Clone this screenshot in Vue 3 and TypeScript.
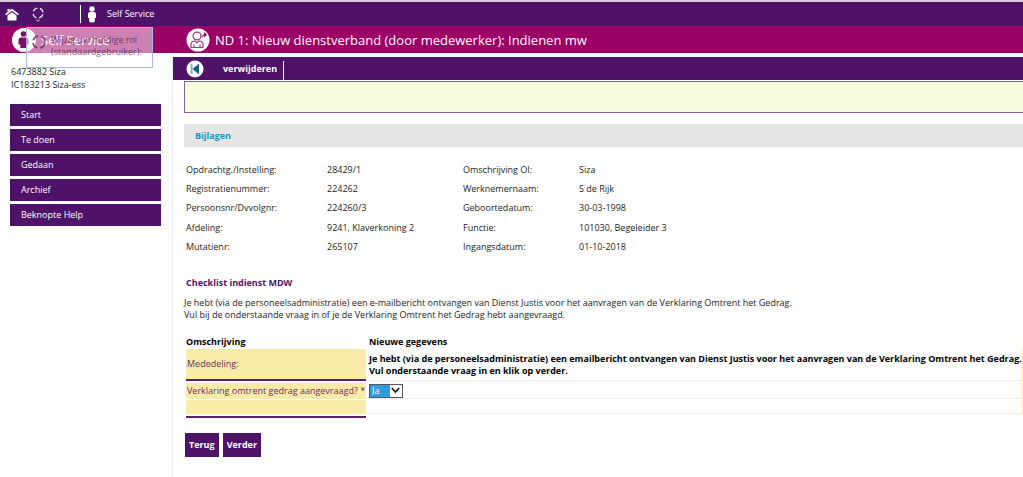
<script setup lang="ts">
import { ref } from 'vue'

const account = ['6473882 Siza', 'IC183213 Siza-ess']
const menu = ['Start', 'Te doen', 'Gedaan', 'Archief', 'Beknopte Help']
const details: string[][] = [
  ['Opdrachtg./Instelling:', '28429/1', 'Omschrijving OI:', 'Siza'],
  ['Registratienummer:', '224262', 'Werknemernaam:', 'S de Rijk'],
  ['Persoonsnr/Dvvolgnr:', '224260/3', 'Geboortedatum:', '30-03-1998'],
  ['Afdeling:', '9241, Klaverkoning 2', 'Functie:', '101030, Begeleider 3'],
  ['Mutatienr:', '265107', 'Ingangsdatum:', '01-10-2018'],
]
const requested = ref('Ja')
</script>

<template>
  <div class="app">
    <nav class="topbar">
      <a href="#" class="home" aria-label="Home">
        <svg width="14" height="13" viewBox="0 0 14 13">
          <path d="M2.500 7.500 L7 4.300 L11.500 7.500 V12.500 H2.500 Z" fill="#fff" />
          <path d="M.6 6.600 L7 1.800 L13.400 6.600" fill="none" stroke="#fff" stroke-width="1.800" />
          <path d="M2.500 1 H5 V2 L2.500 3.800 Z" fill="#fff" />
        </svg>
      </a>
      <a href="#" class="role" aria-label="Rol">
        <svg width="14" height="16" viewBox="0 0 14 16">
          <circle cx="7" cy="7" r="5" fill="none" stroke="#e4d8ea" stroke-width="1.300" stroke-dasharray="5.200 2.650" stroke-dashoffset="-1.300" />
          <path d="M5 13.500 L7 15.300 L9 13.500" fill="none" stroke="#cdb9d6" />
        </svg>
      </a>
      <span class="divider"></span>
      <svg class="person" width="10" height="17" viewBox="0 0 10 17">
        <circle cx="5" cy="3" r="2.700" fill="#fff" />
        <path d="M3 6 H7 Q9 6 9 8 V12 H7.800 V15 Q7.800 16.500 5 16.500 Q2.200 16.500 2.200 15 V12 H1 V8 Q1 6 3 6 Z" fill="#fff" />
      </svg>
      <a href="#" class="crumb">Self Service</a>
    </nav>

    <header class="banner">
      <div class="brand">
        <svg width="26" height="26" viewBox="0 0 26 26">
          <circle cx="13" cy="13" r="12" fill="#fff" />
          <circle cx="12.500" cy="7" r="2.800" fill="#7a1068" />
          <path d="M10.500 10.500 H14.500 Q17.500 10.500 17.500 13 V17.500 H15.700 V21 H9.300 V17.500 H7.500 V13 Q7.500 10.500 10.500 10.500 Z" fill="#7a1068" />
        </svg>
        <span>Self Service</span>
        <div class="popup">
          <svg width="16" height="16" viewBox="0 0 16 16">
            <circle cx="8" cy="8" r="6" fill="none" stroke="#6b3a68" stroke-width="1.600" stroke-dasharray="6.400 3" stroke-dashoffset="-1.500" />
          </svg>
          <span>Wijzig uw huidige rol (standaardgebruiker):</span>
        </div>
      </div>
      <svg width="24" height="24" viewBox="0 0 24 24">
        <circle cx="12" cy="12" r="11.500" fill="#fff" />
        <g fill="none" stroke="#a3387c" stroke-width="1.200">
          <circle cx="11" cy="8" r="3.900" />
          <path d="M5 19.500 V16.500 Q5 13 9 13 L11 15 L13 13 Q17 13 17 16.500 V19.500 Z M8 16.500 V19.500 M14 16.500 V19.500 M16 9 Q16.500 6.800 19 6.800" />
        </g>
        <path d="M18 4 L21 6.800 L18 9.500 Z" fill="#9b0065" />
      </svg>
      <h1>ND 1: Nieuw dienstverband (door medewerker): Indienen mw</h1>
    </header>

    <div class="body">
      <aside class="side">
        <p v-for="line in account" :key="line">{{ line }}</p>
        <nav class="menu">
          <a v-for="item in menu" :key="item" href="#">{{ item }}</a>
        </nav>
      </aside>

      <main class="main">
        <div class="toolbar">
          <button type="button" class="back" aria-label="Terug naar begin">
            <svg width="18" height="18" viewBox="0 0 18 18">
              <circle cx="9" cy="9" r="8.500" fill="#fff" />
              <path d="M4.500 4 H6.500 V14 H4.500 Z" fill="#7ab4c8" />
              <path d="M13 3.500 V14.500 L6.500 9 Z" fill="#17607c" />
            </svg>
          </button>
          <button type="button" class="remove">verwijderen</button>
          <span class="divider"></span>
        </div>

        <div class="content">
          <div class="notice"></div>
          <div class="attachments"><a href="#">Bijlagen</a></div>

          <div class="details">
            <template v-for="row in details" :key="row[0]">
              <span v-for="cell in row" :key="cell">{{ cell }}</span>
            </template>
          </div>

          <h2>Checklist indienst MDW</h2>
          <p class="intro">
            Je hebt (via de personeelsadministratie) een e-mailbericht ontvangen van Dienst Justis voor het aanvragen van de Verklaring Omtrent het Gedrag.<br />
            Vul bij de onderstaande vraag in of je de Verklaring Omtrent het Gedrag hebt aangevraagd.
          </p>

          <table class="form">
            <thead>
              <tr><th class="name">Omschrijving</th><th class="new">Nieuwe gegevens</th><th class="edge"></th></tr>
            </thead>
            <tbody>
              <tr class="message">
                <td class="label">Mededeling:</td>
                <td class="value bold">
                  Je hebt (via de personeelsadministratie) een emailbericht ontvangen van Dienst Justis voor het aanvragen van de Verklaring Omtrent het Gedrag.<br />
                  Vul onderstaande vraag in en klik op verder.
                </td>
                <td class="tint"></td>
              </tr>
              <tr class="question">
                <td class="label"><label for="requested">Verklaring omtrent gedrag aangevraagd? *</label></td>
                <td class="value">
                  <span class="select">
                    <select id="requested" v-model="requested">
                      <option>Ja</option>
                      <option>Nee</option>
                    </select>
                    <svg width="9" height="7" viewBox="0 0 9 7"><path d="M.8 1 L4.500 5 L8.200 1" fill="none" stroke="#111" stroke-width="1.600" /></svg>
                  </span>
                </td>
                <td class="tint"></td>
              </tr>
              <tr class="blank">
                <td class="label"></td><td class="value"></td><td class="tint"></td>
              </tr>
              <tr class="rule"><td></td><td></td><td></td></tr>
            </tbody>
          </table>

          <div class="actions">
            <button type="button">Terug</button>
            <button type="button">Verder</button>
          </div>
        </div>
      </main>
    </div>
  </div>
</template>

<style>
body {
  margin: 0;
  background: #fff;
}
</style>

<style scoped>
.app {
  font: 9px/12px "Open Sans", "Noto Sans", sans-serif;
  color: #1c1c1c;
  border-top: 2px solid #d5c9dc;
  box-sizing: border-box;
  min-height: 100vh;
  display: flex;
  flex-direction: column;
}
a {
  color: inherit;
  text-decoration: none;
}
svg {
  display: block;
  flex: none;
}
p, h1, h2 {
  margin: 0;
}
button {
  font: inherit;
  color: #fff;
  border: 0;
  padding: 0;
  background: none;
}
.topbar {
  background: #4f1269;
  color: #fff;
  height: 24px;
  display: flex;
  align-items: center;
  padding-left: 5px;
}
.role {
  margin-left: 12px;
}
.topbar .divider {
  width: 1px;
  height: 18px;
  background: #fff;
  margin-left: 35px;
}
.person {
  margin: 0 10px 0 6px;
}
.banner {
  background: #9b0065;
  color: #fff;
  height: 27px;
  display: flex;
  align-items: center;
}
.brand {
  position: relative;
  width: 174px;
  box-sizing: border-box;
  padding-left: 11px;
  margin-right: 12px;
  display: flex;
  align-items: center;
  gap: 4px;
  font-size: 13px;
  line-height: 18px;
}
.popup {
  position: absolute;
  left: 26px;
  top: 0;
  width: 127px;
  height: 41px;
  box-sizing: border-box;
  border: 1px solid #a9b8e0;
  background: rgba(255, 255, 255, 0.5);
  color: rgba(70, 20, 70, 0.7);
  display: flex;
  align-items: flex-start;
  gap: 4px;
  padding: 6px 10px 0 4px;
  font-size: 9px;
  line-height: 12px;
}
h1 {
  font-size: 13px;
  line-height: 18px;
  font-weight: 400;
  margin-left: 5px;
  white-space: nowrap;
}
.body {
  display: flex;
  flex: 1;
}
.side {
  width: 173px;
  box-sizing: border-box;
  flex: none;
  padding: 12px 11px 0 10px;
  border-right: 1px solid #f0eef2;
}
.side p {
  line-height: 13px;
  padding-left: 1px;
}
.menu {
  display: flex;
  flex-direction: column;
  gap: 3px;
  margin-top: 13px;
}
.menu a {
  background: #4f1269;
  color: #fff;
  line-height: 22px;
  padding-left: 11px;
}
.main {
  flex: 1;
  min-width: 0;
  padding-top: 4px;
}
.toolbar {
  background: #4f1269;
  height: 23px;
  display: flex;
  align-items: center;
}
.back {
  margin-left: 13px;
}
.remove {
  margin-left: 19px;
  font-weight: 700;
}
.toolbar .divider {
  width: 1px;
  height: 19px;
  background: #fff;
  margin-left: 6px;
  align-self: flex-end;
}
.content {
  padding-left: 11px;
}
.notice {
  height: 32px;
  box-sizing: border-box;
  border: 1px solid #85638f;
  border-right: 0;
  background: #f6fddf;
  margin-top: 1px;
}
.attachments {
  background: #e5e5e5;
  margin-top: 11px;
  padding-left: 11px;
  line-height: 23px;
  font-weight: 700;
  color: #1497c4;
}
.details {
  display: grid;
  grid-template-columns: 141px 136px 116px 1fr;
  grid-auto-rows: 1fr;
  align-items: center;
  height: 97px;
  margin: 13px 0 0 2px;
}
h2 {
  font-size: 9px;
  line-height: 12px;
  color: #4f1269;
  margin: 20px 0 0 2px;
}
.intro {
  margin-top: 8px;
  white-space: nowrap;
}
.form {
  width: calc(100% - 2px);
  border-collapse: separate;
  border-spacing: 0;
  table-layout: fixed;
  margin: 14px 0 0 2px;
}
.form th, .form td {
  padding: 0;
}
.form th {
  text-align: left;
  line-height: 14px;
  color: #000;
}
.form .name {
  width: 180px;
}
.form .edge {
  width: 1px;
}
.form .new, .form .value {
  padding-left: 3px;
}
.form .label {
  background: #f8eba8;
  color: #6b2c5b;
  padding-left: 1px;
  white-space: nowrap;
}
.tint {
  background: #f8eba8;
}
.value {
  border-bottom: 1px solid #eee;
}
.bold {
  font-weight: 700;
  color: #000;
  white-space: nowrap;
}
.message td {
  height: 30px;
}
.message .label {
  border-bottom: 2px solid #5b2173;
}
.question td {
  height: 15px;
  border-top: 2px solid #fff;
}
.blank td {
  height: 13px;
  border-top: 1px solid #fff;
}
.rule td {
  height: 2px;
}
.rule td:first-child {
  border-bottom: 2px solid #5b2173;
}
.select {
  position: relative;
  display: flex;
  align-items: center;
  width: 34px;
  height: 14px;
  box-sizing: border-box;
  border: 1px solid #555;
}
select {
  appearance: none;
  font: inherit;
  line-height: 12px;
  color: #fff;
  width: 100%;
  height: 12px;
  padding: 0 0 0 2px;
  border: 0;
  border-radius: 0;
  background: linear-gradient(#3399e0, #3399e0) 0 0 / 20px 100% no-repeat;
}
option {
  color: #000;
}
.select svg {
  position: absolute;
  right: 2px;
  pointer-events: none;
}
.actions {
  display: flex;
  gap: 4px;
  margin: 15px 0 0 1px;
}
.actions button {
  background: #4f1269;
  font-weight: 700;
  line-height: 24px;
  padding: 0 4px;
}
</style>
